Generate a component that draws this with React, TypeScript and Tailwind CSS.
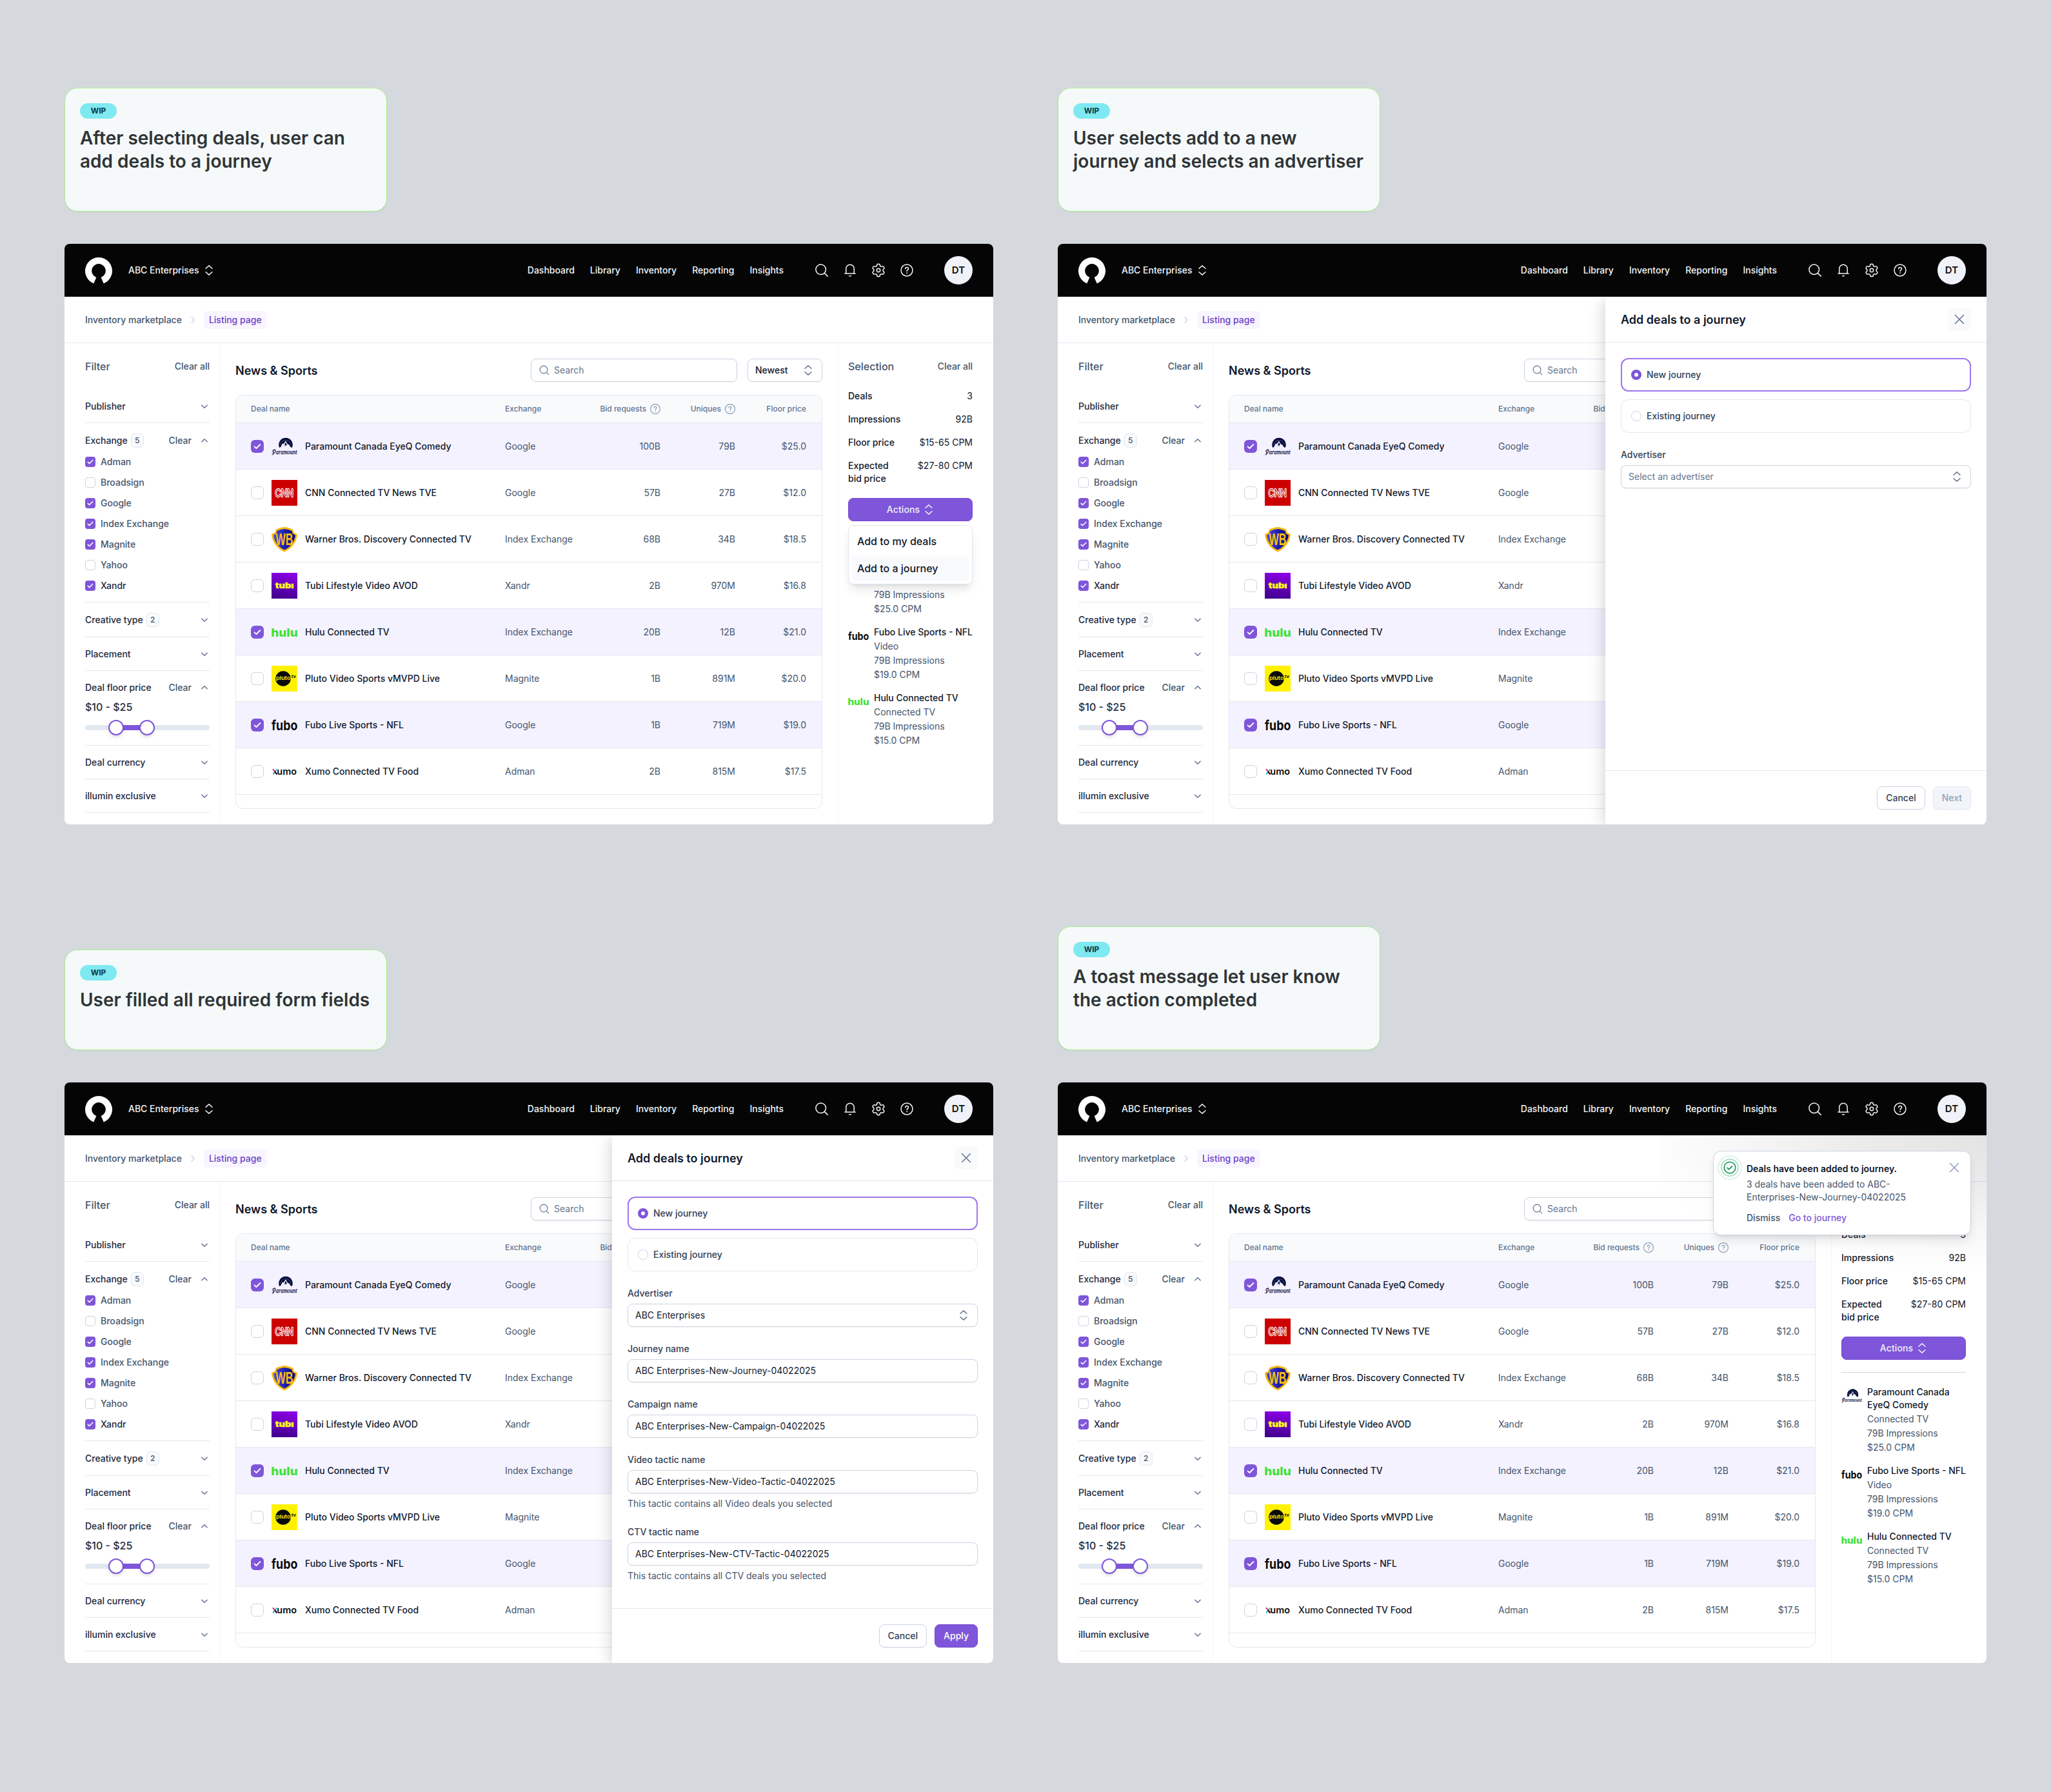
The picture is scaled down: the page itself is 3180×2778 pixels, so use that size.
import React from "react";

type IconProps = { className?: string };

function Caret({ className = "" }: IconProps) {
  return (
    <svg viewBox="0 0 20 20" className={className} fill="none" stroke="currentColor" strokeWidth="1.5" strokeLinecap="round" strokeLinejoin="round">
      <path d="M5 7.2 10 2.9l5 4.300M5 12.800l5 4.300 5-4.300" />
    </svg>
  );
}

function Chevron({ up = false }: { up?: boolean }) {
  return (
    <svg viewBox="0 0 16 16" className="size-4 text-slate-500" fill="none" stroke="currentColor" strokeWidth="1.5" strokeLinecap="round" strokeLinejoin="round">
      {up ? <path d="M3.8 9.8 8 5.8l4.2 4" /> : <path d="M3.8 6.2 8 10.2l4.2-4" />}
    </svg>
  );
}

function Cross({ className = "" }: IconProps) {
  return (
    <svg viewBox="0 0 20 20" className={className} fill="none" stroke="currentColor" strokeWidth="1.5" strokeLinecap="round">
      <path d="m3.5 3.5 13 13M16.5 3.5l-13 13" />
    </svg>
  );
}

function SearchIcon({ className = "" }: IconProps) {
  return (
    <svg viewBox="0 0 24 24" className={className} fill="none" stroke="currentColor" strokeWidth="1.5" strokeLinecap="round">
      <circle cx="10.7" cy="10.7" r="7.8" />
      <path d="m16.4 16.4 4.7 4.7" />
    </svg>
  );
}

function BellIcon() {
  return (
    <svg viewBox="0 0 24 24" className="size-6" fill="none" stroke="currentColor" strokeWidth="1.5" strokeLinecap="round" strokeLinejoin="round">
      <path d="M5.8 17V9.4a6.2 6.2 0 0 1 12.4 0V17M3.9 17h16.2M10.7 20.8h2.6" />
    </svg>
  );
}

function gearOutline(): string {
  const pts: [number, number][] = [];
  for (let i = 0; i < 6; i++) {
    const base = -90 + i * 60;
    const ring: [number, number][] = [[-13, 9.9], [13, 9.9], [20, 7], [40, 7]];
    for (const [offset, radius] of ring) {
      const a = ((base + offset) * Math.PI) / 180;
      pts.push([12 + radius * Math.cos(a), 12 + radius * Math.sin(a)]);
    }
  }
  const n = pts.length;
  const mid = (i: number) => {
    const p = pts[i % n];
    const q = pts[(i + 1) % n];
    return `${((p[0] + q[0]) / 2).toFixed(2)} ${((p[1] + q[1]) / 2).toFixed(2)}`;
  };
  let d = `M${mid(0)}`;
  for (let i = 1; i <= n; i++) {
    const c = pts[i % n];
    d += `Q${c[0].toFixed(2)} ${c[1].toFixed(2)} ${mid(i)}`;
  }
  return d + "Z";
}

function GearIcon() {
  return (
    <svg viewBox="0 0 24 24" className="size-6" fill="none" stroke="currentColor" strokeWidth="1.5" strokeLinejoin="round">
      <path d={gearOutline()} />
      <circle cx="12" cy="12" r="2.7" />
    </svg>
  );
}

function HelpIcon({ className = "" }: IconProps) {
  return (
    <svg viewBox="0 0 24 24" className={className} fill="none" stroke="currentColor" strokeWidth="1.5" strokeLinecap="round" strokeLinejoin="round">
      <circle cx="12" cy="12" r="9" />
      <path d="M9.6 9.7c.1-1.3 1.1-2.2 2.4-2.2 1.400 0 2.500.9 2.500 2.200 0 1.600-2.400 1.900-2.400 3.700v.2" />
      <circle cx="12.1" cy="16.2" r=".6" fill="currentColor" strokeWidth=".6" />
    </svg>
  );
}

function BrandMark() {
  return (
    <svg viewBox="0 0 42 41" className="h-[41px] w-[42px]" fill="#fff">
      <path d="M13.2 40.5A21 21 0 1 1 28.800 40.500L24.600 31A10.800 10.800 0 1 0 17.400 31Z" />
    </svg>
  );
}

type Brand = "paramount" | "cnn" | "wb" | "tubi" | "hulu" | "pluto" | "fubo" | "xumo";

function Logo({ brand, className = "size-10" }: { brand: Brand; className?: string }) {
  const cls = `${className} shrink-0 overflow-visible`;
  const f = "Inter, sans-serif";
  switch (brand) {
    case "paramount":
      return (
        <svg viewBox="0 0 40 40" className={cls}>
          <path d="M12.200 22A10.800 10.800 0 1 1 31.800 22L29.500 21 26.500 16.500 25.500 17.500 22 11.500 18.500 16.200 17 15.500 14.200 21Z" fill="#030b3c" />
          <path d="M13.800 17.500A8.300 8.300 0 0 1 30.200 17.500" fill="none" stroke="#fff" strokeWidth=".8" strokeDasharray=".8 1.400" />
          <path d="m22 13.500 2 4.200-1-.5-.8 3-1.300-3-2.300 3.500Z" fill="#030b3c" />
          <text x="1.500" y="31.800" fontFamily="'Liberation Serif', serif" fontStyle="italic" fontSize="10.500" textLength="38" lengthAdjust="spacingAndGlyphs" fill="#030b3c" stroke="#030b3c" strokeWidth=".25">Paramount</text>
          <path d="M6 24.600C2 25 .2 28 1.800 28.400M4.500 29.500C3.500 32.500 1.500 33.800.3 32.600" fill="none" stroke="#030b3c" strokeWidth=".7" />
        </svg>
      );
    case "cnn":
      return (
        <svg viewBox="0 0 40 40" className={cls}>
          <rect width="40" height="40" fill="#cc0000" />
          <text x="5.500" y="25.700" fontFamily={f} fontWeight="300" fontSize="15.500" textLength="28.500" lengthAdjust="spacingAndGlyphs" fill="#cc0000" stroke="#fff" strokeWidth="2.300" strokeLinejoin="round" style={{ paintOrder: "stroke" }}>CNN</text>
        </svg>
      );
    case "wb":
      return (
        <svg viewBox="0 0 40 40" className={cls}>
          <defs>
            <linearGradient id="wb-blue" x1="0" x2="1">
              <stop offset="0" stopColor="#4a4ae8" />
              <stop offset=".55" stopColor="#1c1ca8" />
              <stop offset="1" stopColor="#0c0c70" />
            </linearGradient>
          </defs>
          <path d="M20 1C25 1.500 29.500 3 33.500 5L34.800 9.800 40 12C39.500 24 31 35 20 39.500 9 35 .5 24 0 12L5.200 9.800 6.500 5C10.500 3 15 1.500 20 1Z" fill="#f9b90f" />
          <path d="M20 4C24 4.300 28 5.500 31.500 7L32.800 11.500 37 13.500C36 23.500 29 32.500 20 36.500 11 32.500 4 23.500 3 13.500L7.200 11.500 8.500 7C12 5.500 16 4.300 20 4Z" fill="url(#wb-blue)" />
          <text x="6.500" y="29" fontFamily="'Liberation Sans', sans-serif" fontWeight="700" fontSize="26" textLength="27" lengthAdjust="spacingAndGlyphs" fill="#fbc00d">WB</text>
        </svg>
      );
    case "tubi":
      return (
        <svg viewBox="0 0 40 40" className={cls}>
          <defs>
            <linearGradient id="tubi-violet" x1=".6" y1="0" x2=".4" y2="1">
              <stop offset="0" stopColor="#8a00e6" />
              <stop offset="1" stopColor="#41008f" />
            </linearGradient>
          </defs>
          <rect width="40" height="40" fill="url(#tubi-violet)" />
          <text x="5.800" y="24.300" fontFamily={f} fontWeight="900" fontSize="12" textLength="28.800" lengthAdjust="spacingAndGlyphs" fill="#ffff13" stroke="#ffff13" strokeWidth=".3">tubı</text>
        </svg>
      );
    case "hulu":
      return (
        <svg viewBox="0 0 40 40" className={cls}>
          <text x="-.7" y="26.500" fontFamily={f} fontWeight="800" fontSize="17.300" textLength="41.300" lengthAdjust="spacingAndGlyphs" fill="#3de234">hulu</text>
        </svg>
      );
    case "pluto":
      return (
        <svg viewBox="0 0 40 40" className={cls}>
          <rect width="40" height="40" fill="#fff200" />
          <circle cx="18" cy="20" r="11.800" fill="#0a0a0a" />
          <text x="7" y="22.400" fontFamily={f} fontWeight="600" fontSize="8" textLength="22.500" lengthAdjust="spacingAndGlyphs" fill="#fff200">pluto</text>
          <text x="30.700" y="19" fontFamily={f} fontWeight="700" fontSize="6.500" textLength="7.300" lengthAdjust="spacingAndGlyphs" fill="#0a0a0a">tv</text>
        </svg>
      );
    case "fubo":
      return (
        <svg viewBox="0 0 40 40" className={cls}>
          <text x="0" y="28" fontFamily={f} fontWeight="700" fontSize="20.500" textLength="40.300" lengthAdjust="spacingAndGlyphs" fill="#0a0a0a">fubo</text>
        </svg>
      );
    case "xumo":
      return (
        <svg viewBox="0 0 40 40" className={cls}>
          <text x="8.300" y="24.700" fontFamily={f} fontWeight="600" fontSize="14" textLength="30.700" lengthAdjust="spacingAndGlyphs" fill="#0a0a0a">umo</text>
          <path d="M8.300 16.500 2.300 24.300" stroke="#14b8c4" strokeWidth="2" />
          <path d="m2 16.300 6.500 8" stroke="#d6246e" strokeWidth="2" />
          <path d="m5.200 20.300 3.300 4.200" stroke="#0a0a0a" strokeWidth="2" />
        </svg>
      );
  }
}

function Checkbox({ checked, small = false }: { checked: boolean; small?: boolean }) {
  const size = small ? "size-4 rounded" : "size-5 rounded-md";
  return checked ? (
    <span className={`${size} flex shrink-0 items-center justify-center bg-[#7f56d9]`}>
      <svg viewBox="0 0 14 14" className={small ? "size-3" : "size-3.5"} fill="none" stroke="#fff" strokeWidth="1.8" strokeLinecap="round" strokeLinejoin="round">
        <path d="M2.500 7.300 5.400 10l6-6" />
      </svg>
    </span>
  ) : (
    <span className={`${size} shrink-0 border border-slate-300 bg-white`} />
  );
}

function NavBar() {
  return (
    <header className="flex h-[82px] shrink-0 items-center bg-[#050505] px-8 text-sm font-medium text-slate-100">
      <BrandMark />
      <span className="ml-[25px]">ABC Enterprises</span>
      <Caret className="ml-[5px] size-5" />
      <nav className="ml-auto flex items-center gap-6">
        <span>Dashboard</span>
        <span>Library</span>
        <span>Inventory</span>
        <span>Reporting</span>
        <span>Insights</span>
      </nav>
      <div className="ml-[47px] flex items-center gap-5">
        <SearchIcon className="size-6" />
        <BellIcon />
        <GearIcon />
        <HelpIcon className="size-6" />
      </div>
      <span className="ml-[46px] flex size-11 items-center justify-center rounded-full bg-[#eff2f8] text-[15px] font-semibold text-[#111]">DT</span>
    </header>
  );
}

function Breadcrumbs() {
  return (
    <div className="flex h-[72px] shrink-0 items-center border-b border-slate-200 px-8 text-sm font-medium text-slate-600">
      <span>Inventory marketplace</span>
      <svg viewBox="0 0 16 16" className="mx-[9px] size-4 text-slate-300" fill="none" stroke="currentColor" strokeWidth="1.300" strokeLinecap="round" strokeLinejoin="round">
        <path d="m6 3.500 4 4.500-4 4.500" />
      </svg>
      <span className="flex h-7 items-center rounded-md bg-[#f8f5ff] px-2 text-[#6941c6]">Listing page</span>
    </div>
  );
}

function FilterHeader({ label, count, open = false, badge = false }: { label: string; count?: number; open?: boolean; badge?: boolean }) {
  return (
    <div className={`flex items-center ${badge ? "h-[22px]" : "h-5"}`}>
      <span>{label}</span>
      {count !== undefined && (
        <span className="ml-[5px] flex h-[22px] w-5 items-center justify-center rounded-md border border-slate-200 bg-slate-50 text-xs font-medium text-slate-600">{count}</span>
      )}
      {open && <span className="mr-3 ml-auto text-slate-600">Clear</span>}
      <span className={open ? "" : "ml-auto"}>
        <Chevron up={open} />
      </span>
    </div>
  );
}

const exchanges: [string, boolean][] = [
  ["Adman", true],
  ["Broadsign", false],
  ["Google", true],
  ["Index Exchange", true],
  ["Magnite", true],
  ["Yahoo", false],
  ["Xandr", true],
];

function Filters() {
  const section = "border-b border-slate-200 pt-4 pb-[15px]";
  return (
    <aside className="w-[241px] shrink-0 border-r border-slate-100 pt-6 pr-[15px] pl-8 text-sm font-medium text-slate-800">
      <div className="mb-6 flex h-6 items-center justify-between text-slate-600">
        <span className="text-base">Filter</span>
        <span>Clear all</span>
      </div>
      <div className={section}><FilterHeader label="Publisher" /></div>
      <div className={section}>
        <FilterHeader label="Exchange" count={5} open badge />
        <ul className="mt-3 flex flex-col gap-3">
          {exchanges.map(([name, checked]) => (
            <li key={name} className="flex h-5 items-center gap-2">
              <Checkbox small checked={checked} />
              <span className={name === "Xandr" ? "text-slate-800" : "text-slate-600"}>{name}</span>
            </li>
          ))}
        </ul>
      </div>
      <div className={section}><FilterHeader label="Creative type" count={2} badge /></div>
      <div className={section}><FilterHeader label="Placement" /></div>
      <div className={section}>
        <FilterHeader label="Deal floor price" open />
        <div className="mt-2 text-base leading-6">$10 - $25</div>
        <div className="relative mt-2 flex h-6 items-center">
          <div className="h-2 w-full rounded-full bg-slate-200" />
          <div className="absolute left-12 h-2 w-12 bg-[#7f56d9]" />
          <div className="absolute left-9 size-6 rounded-full border-2 border-[#7f56d9] bg-white shadow-md" />
          <div className="absolute left-[84px] size-6 rounded-full border-2 border-[#7f56d9] bg-white shadow-md" />
        </div>
      </div>
      <div className={section}><FilterHeader label="Deal currency" /></div>
      <div className={section}><FilterHeader label="illumin exclusive" /></div>
    </aside>
  );
}

type Deal = { brand: Brand; name: string; exchange: string; bids: string; uniques: string; price: string; selected: boolean };

const deals: Deal[] = [
  { brand: "paramount", name: "Paramount Canada EyeQ Comedy", exchange: "Google", bids: "100B", uniques: "79B", price: "$25.0", selected: true },
  { brand: "cnn", name: "CNN Connected TV News TVE", exchange: "Google", bids: "57B", uniques: "27B", price: "$12.0", selected: false },
  { brand: "wb", name: "Warner Bros. Discovery Connected TV", exchange: "Index Exchange", bids: "68B", uniques: "34B", price: "$18.5", selected: false },
  { brand: "tubi", name: "Tubi Lifestyle Video AVOD", exchange: "Xandr", bids: "2B", uniques: "970M", price: "$16.8", selected: false },
  { brand: "hulu", name: "Hulu Connected TV", exchange: "Index Exchange", bids: "20B", uniques: "12B", price: "$21.0", selected: true },
  { brand: "pluto", name: "Pluto Video Sports vMVPD Live", exchange: "Magnite", bids: "1B", uniques: "891M", price: "$20.0", selected: false },
  { brand: "fubo", name: "Fubo Live Sports - NFL", exchange: "Google", bids: "1B", uniques: "719M", price: "$19.0", selected: true },
  { brand: "xumo", name: "Xumo Connected TV Food", exchange: "Adman", bids: "2B", uniques: "815M", price: "$17.5", selected: false },
];

function HeaderHelp({ label }: { label: string }) {
  return (
    <span className="flex items-center justify-end gap-1 whitespace-nowrap">
      {label}
      <HelpIcon className="-mr-0.5 size-5 text-slate-400" />
    </span>
  );
}

function Listing() {
  const cols = "grid grid-cols-[394px_140px_101px_116px_110px] items-center border-b border-slate-200 pr-6 pl-[23px]";
  return (
    <main className="w-[958px] shrink-0 px-6 pt-6">
      <div className="flex h-9 items-center">
        <h1 className="pt-0.5 text-lg font-semibold text-slate-900">News &amp; Sports</h1>
        <div className="ml-auto flex h-9 w-80 items-center gap-1.5 rounded-lg border border-slate-300 px-[11px] text-sm text-slate-500 shadow-xs">
          <SearchIcon className="size-[18px]" />
          Search
        </div>
        <div className="ml-4 flex h-9 w-[116px] items-center justify-between rounded-lg border border-slate-300 px-[11px] text-sm font-medium text-slate-900 shadow-xs">
          Newest
          <Caret className="size-5 text-slate-500" />
        </div>
      </div>
      <div className="mt-5 h-[642px] overflow-hidden rounded-xl border border-slate-200">
        <div className={`${cols} h-[43px] bg-slate-50 text-xs font-medium text-slate-500`}>
          <span>Deal name</span>
          <span>Exchange</span>
          <HeaderHelp label="Bid requests" />
          <HeaderHelp label="Uniques" />
          <span className="text-right">Floor price</span>
        </div>
        {deals.map((d) => (
          <div key={d.name} className={`${cols} h-[72px] text-sm text-slate-600 ${d.selected ? "bg-[#f4f2ff]" : "bg-white"}`}>
            <span className="flex items-center gap-3 font-medium text-slate-900">
              <Checkbox checked={d.selected} />
              <Logo brand={d.brand} />
              {d.name}
            </span>
            <span>{d.exchange}</span>
            <span className="text-right">{d.bids}</span>
            <span className="text-right">{d.uniques}</span>
            <span className="text-right">{d.price}</span>
          </div>
        ))}
      </div>
    </main>
  );
}

const picked: { brand: Brand; title: string[]; kind: string; cpm: string }[] = [
  { brand: "paramount", title: ["Paramount Canada", "EyeQ Comedy"], kind: "Connected TV", cpm: "$25.0 CPM" },
  { brand: "fubo", title: ["Fubo Live Sports - NFL"], kind: "Video", cpm: "$19.0 CPM" },
  { brand: "hulu", title: ["Hulu Connected TV"], kind: "Connected TV", cpm: "$15.0 CPM" },
];

function Selection({ menu }: { menu: boolean }) {
  const rows = [
    ["Deals", "3"],
    ["Impressions", "92B"],
    ["Floor price", "$15-65 CPM"],
  ];
  return (
    <aside className="w-[241px] shrink-0 border-l border-slate-100 pt-6 pr-8 pl-[15px] text-sm text-slate-900">
      <div className="flex h-6 items-center justify-between font-medium text-slate-600">
        <span className="text-base">Selection</span>
        <span>Clear all</span>
      </div>
      <div className="mt-6 flex flex-col gap-4">
        {rows.map(([k, v]) => (
          <div key={k} className="flex justify-between leading-5">
            <span className="font-medium">{k}</span>
            <span>{v}</span>
          </div>
        ))}
        <div className="flex justify-between leading-5">
          <span className="font-medium">Expected<br />bid price</span>
          <span>$27-80 CPM</span>
        </div>
      </div>
      <div className="relative mt-5">
        <button className="flex h-9 w-full items-center justify-center gap-1 rounded-lg border border-[#7448d2] bg-[#7f56d9] pl-0.5 font-medium text-slate-100">
          <span className="tracking-[0.01em]">Actions</span>
          <Caret className="size-5" />
        </button>
        {menu && (
          <div className="absolute top-[42px] left-0 flex h-[92px] w-full flex-col rounded-lg border border-slate-200 bg-white p-[5px] text-base font-medium shadow-lg">
            <div className="flex h-[39px] items-center rounded-md px-2">Add to my deals</div>
            <div className="mt-[3px] flex h-10 items-center rounded-md bg-slate-50 px-2">Add to a journey</div>
          </div>
        )}
      </div>
      <div className="mt-[19px] h-px bg-slate-300" />
      <div className="mt-5 flex flex-col gap-4">
        {picked.map((p) => (
          <div key={p.brand} className="flex gap-2 leading-5 whitespace-nowrap">
            <Logo brand={p.brand} className="size-8" />
            <div className="flex flex-col gap-0.5 text-slate-600">
              <div className="font-medium text-slate-900">{p.title.map((t) => <div key={t}>{t}</div>)}</div>
              <div>{p.kind}</div>
              <div>79B Impressions</div>
              <div>{p.cpm}</div>
            </div>
          </div>
        ))}
      </div>
    </aside>
  );
}

function Field({ label, value, placeholder = false, select = false, hint }: { label: string; value: string; placeholder?: boolean; select?: boolean; hint?: string }) {
  return (
    <div className="flex flex-col gap-1.5 text-sm leading-5">
      <span className="font-medium text-slate-700">{label}</span>
      <div className={`flex h-9 items-center justify-between rounded-lg border border-slate-300 px-[11px] shadow-xs ${placeholder ? "text-slate-500" : "text-slate-900"}`}>
        {value}
        {select && <Caret className="size-5 text-slate-500" />}
      </div>
      {hint && <span className="text-slate-600">{hint}</span>}
    </div>
  );
}

function JourneyPanel({ title, submit, filled = false }: { title: string; submit: string; filled?: boolean }) {
  return (
    <section className="absolute top-[82px] right-0 bottom-0 flex w-[591px] flex-col bg-white shadow-[0_4px_24px_rgba(0,0,0,0.2)] [clip-path:inset(0_0_0_-60px)]">
      <div className="flex h-[71px] shrink-0 items-center justify-between border-b border-slate-200 px-6">
        <h2 className="pt-0.5 text-lg font-semibold text-slate-900">{title}</h2>
        <span className="flex size-9 items-center justify-center rounded-lg bg-slate-50 text-slate-500">
          <Cross className="size-5" />
        </span>
      </div>
      <div className="flex flex-col gap-3 px-6 pt-6 text-sm font-medium text-slate-700">
        <div className="flex h-[52px] items-center gap-2 rounded-xl border-2 border-[#9e77ed] px-3.5">
          <span className="size-4 rounded-full border-[5px] border-[#7f56d9] bg-white" />
          New journey
        </div>
        <div className="flex h-[52px] items-center gap-2 rounded-xl border border-slate-200 px-[15px]">
          <span className="size-4 rounded-full border border-slate-300 bg-white" />
          Existing journey
        </div>
      </div>
      <div className="flex flex-1 flex-col gap-6 px-6 pt-6">
        {filled ? (
          <>
            <Field label="Advertiser" value="ABC Enterprises" select />
            <Field label="Journey name" value="ABC Enterprises-New-Journey-04022025" />
            <Field label="Campaign name" value="ABC Enterprises-New-Campaign-04022025" />
            <Field label="Video tactic name" value="ABC Enterprises-New-Video-Tactic-04022025" hint="This tactic contains all Video deals you selected" />
            <Field label="CTV tactic name" value="ABC Enterprises-New-CTV-Tactic-04022025" hint="This tactic contains all CTV deals you selected" />
          </>
        ) : (
          <Field label="Advertiser" value="Select an advertiser" placeholder select />
        )}
      </div>
      <div className={`flex shrink-0 items-start justify-end gap-3 border-t border-slate-200 px-6 pt-6 text-sm font-medium ${filled ? "h-[85px]" : "h-[84px]"}`}>
        <button className="h-9 rounded-lg border border-slate-300 px-[13px] text-slate-700 shadow-xs">Cancel</button>
        {filled ? (
          <button className="h-9 rounded-lg border border-[#7448d2] bg-[#7f56d9] px-[13px] text-white shadow-xs">{submit}</button>
        ) : (
          <button className="h-9 rounded-lg border border-slate-200 bg-slate-100 px-[13px] text-slate-400 shadow-xs">{submit}</button>
        )}
      </div>
    </section>
  );
}

function Toast() {
  return (
    <div className="absolute top-[82px] right-0 h-[260px] w-[505px] bg-[radial-gradient(560px_215px_at_100%_0%,rgba(0,0,0,0.11),rgba(0,0,0,0.08)_35%,rgba(0,0,0,0.03)_70%,rgba(0,0,0,0)_100%)] pt-6 pr-6">
      <div className="relative ml-auto flex h-[131px] w-[400px] rounded-xl border border-slate-300 bg-white text-sm leading-5 text-slate-600 shadow-lg">
        <svg viewBox="0 0 40 40" className="mt-[5px] ml-[5px] size-10 shrink-0" fill="none" stroke="#099250" strokeWidth="1.600">
          <circle cx="20" cy="20" r="18" stroke="#dff3ea" strokeWidth="2" />
          <circle cx="20" cy="20" r="13" stroke="#b4e2cb" strokeWidth="2" />
          <circle cx="20" cy="20" r="8.800" />
          <path d="m16.200 20.300 2.600 2.500 5-4.900" strokeLinecap="round" strokeLinejoin="round" />
        </svg>
        <div className="ml-1.5 pt-[17px]">
          <div className="font-semibold text-slate-900">Deals have been added to journey.</div>
          <div className="mt-1">3 deals have been added to ABC-<br />Enterprises-New-Journey-04022025</div>
          <div className="mt-3 flex gap-[13px] font-medium">
            <span>Dismiss</span>
            <span className="text-[#7f56d9]">Go to journey</span>
          </div>
        </div>
        <Cross className="absolute top-[15px] right-[15px] size-5 text-slate-400" />
      </div>
    </div>
  );
}

function Screen({ menu = false, children }: { menu?: boolean; children?: React.ReactNode }) {
  return (
    <div className="relative flex h-[900px] w-[1440px] flex-col overflow-hidden rounded-lg bg-white">
      <NavBar />
      <Breadcrumbs />
      <div className="flex min-h-0 flex-1">
        <Filters />
        <Listing />
        <Selection menu={menu} />
      </div>
      {children}
    </div>
  );
}

function Step({ lines, children }: { lines: string[]; children: React.ReactNode }) {
  return (
    <section className="flex flex-col gap-[50px]">
      <div className="flex w-[500px] flex-col items-start gap-3 rounded-[20px] border border-[#a6f088] bg-[#f5f9f9] px-[23px] pt-[23px] pb-[59px] shadow-xs">
        <span className="flex h-6 w-[57px] items-center justify-center rounded-full bg-[#7ee9f1] text-xs font-bold text-[#0b3a44]">WIP</span>
        <h2 className="text-[28px] leading-9 font-semibold whitespace-nowrap text-[#2f3437]">
          {lines.map((l) => <div key={l}>{l}</div>)}
        </h2>
      </div>
      {children}
    </section>
  );
}

export default function App() {
  return (
    <div className="grid h-[2778px] w-[3180px] grid-cols-[1440px_1440px] content-start items-end gap-x-[100px] gap-y-[158px] bg-[#d5d9de] pt-[136px] pl-[100px] font-['Inter',sans-serif]">
      <Step lines={["After selecting deals, user can", "add deals to a journey"]}>
        <Screen menu />
      </Step>
      <Step lines={["User selects add to a new", "journey and selects an advertiser"]}>
        <Screen>
          <JourneyPanel title="Add deals to a journey" submit="Next" />
        </Screen>
      </Step>
      <Step lines={["User filled all required form fields"]}>
        <Screen>
          <JourneyPanel title="Add deals to journey" submit="Apply" filled />
        </Screen>
      </Step>
      <Step lines={["A toast message let user know", "the action completed"]}>
        <Screen>
          <Toast />
        </Screen>
      </Step>
    </div>
  );
}
